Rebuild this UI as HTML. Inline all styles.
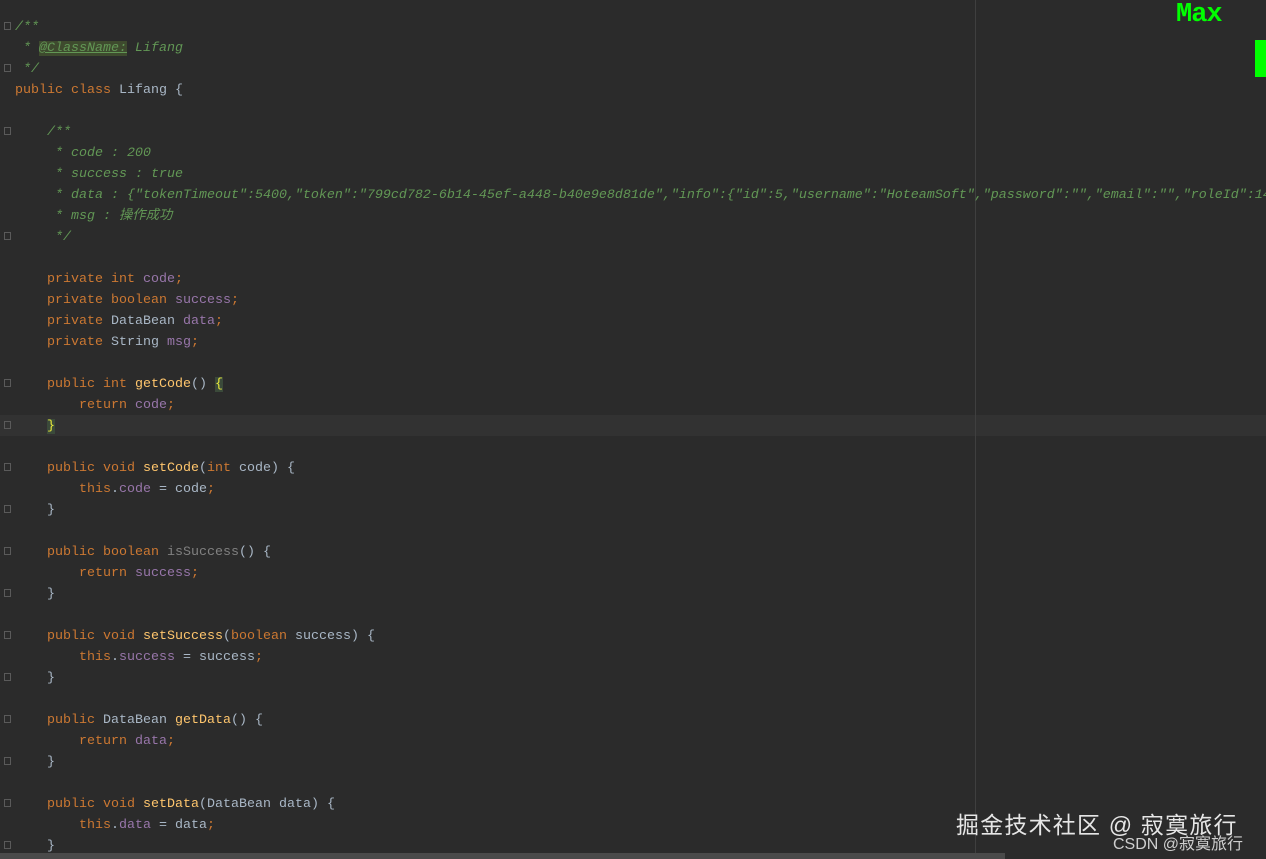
<!DOCTYPE html>
<html><head><meta charset="utf-8"><style>
html,body{margin:0;padding:0;background:#2b2b2b;width:1266px;height:859px;overflow:hidden;position:relative}
.code{position:absolute;left:15px;top:17px;font-family:"Liberation Mono","Noto Sans CJK SC",monospace;font-size:13.33px;color:#a9b7c6}
.l{height:21px;line-height:21px;white-space:pre;overflow:hidden;width:1251px}
.k{color:#cc7832}.c{color:#629755;font-style:italic}.f{color:#9876aa}.m{color:#ffc66d}.g{color:#808080}
.hl{position:absolute;left:0;top:415px;width:1266px;height:21px;background:#323232}
.vr{position:absolute;left:975px;top:0;width:1px;height:859px;background:#3f3f3f}
.sb{position:absolute;left:0;top:853px;width:1005px;height:6px;background:#4a4a4a}
.fold{position:absolute;left:4px;width:7px;height:8px;border:1px solid #5a5a5a;box-sizing:border-box}
.wm{position:absolute;font-family:"Liberation Sans","Noto Sans CJK SC",sans-serif;color:#e6e6e6;white-space:nowrap}
</style></head><body>
<div class="hl"></div>
<div class="vr"></div>
<div class="sb"></div>
<div class="code"><div class="l"><span class="c">/**</span></div><div class="l"><span class="c"> * <span style="background:#3e4a2e;text-decoration:underline">@ClassName:</span> Lifang</span></div><div class="l"><span class="c"> */</span></div><div class="l"><span class="k">public class </span>Lifang {</div><div class="l"> </div><div class="l"><span class="c">    /**</span></div><div class="l"><span class="c">     * code : 200</span></div><div class="l"><span class="c">     * success : true</span></div><div class="l"><span class="c">     * data : {"tokenTimeout":5400,"token":"799cd782-6b14-45ef-a448-b40e9e8d81de","info":{"id":5,"username":"HoteamSoft","password":"","email":"","roleId":14}}</span></div><div class="l"><span class="c">     * msg : 操作成功</span></div><div class="l"><span class="c">     */</span></div><div class="l"> </div><div class="l">    <span class="k">private int </span><span class="f">code</span><span class="k">;</span></div><div class="l">    <span class="k">private boolean </span><span class="f">success</span><span class="k">;</span></div><div class="l">    <span class="k">private </span>DataBean <span class="f">data</span><span class="k">;</span></div><div class="l">    <span class="k">private </span>String <span class="f">msg</span><span class="k">;</span></div><div class="l"> </div><div class="l">    <span class="k">public int </span><span class="m">getCode</span>() <span style="color:#e8e83a;background:#3b4a3a">{</span></div><div class="l">        <span class="k">return </span><span class="f">code</span><span class="k">;</span></div><div class="l">    <span style="color:#e8e83a;background:#3b4a3a">}</span></div><div class="l"> </div><div class="l">    <span class="k">public void </span><span class="m">setCode</span>(<span class="k">int </span>code) {</div><div class="l">        <span class="k">this</span>.<span class="f">code </span>= code<span class="k">;</span></div><div class="l">    }</div><div class="l"> </div><div class="l">    <span class="k">public boolean </span><span class="g">isSuccess</span>() {</div><div class="l">        <span class="k">return </span><span class="f">success</span><span class="k">;</span></div><div class="l">    }</div><div class="l"> </div><div class="l">    <span class="k">public void </span><span class="m">setSuccess</span>(<span class="k">boolean </span>success) {</div><div class="l">        <span class="k">this</span>.<span class="f">success </span>= success<span class="k">;</span></div><div class="l">    }</div><div class="l"> </div><div class="l">    <span class="k">public </span>DataBean <span class="m">getData</span>() {</div><div class="l">        <span class="k">return </span><span class="f">data</span><span class="k">;</span></div><div class="l">    }</div><div class="l"> </div><div class="l">    <span class="k">public void </span><span class="m">setData</span>(DataBean data) {</div><div class="l">        <span class="k">this</span>.<span class="f">data </span>= data<span class="k">;</span></div><div class="l">    }</div></div>
<div class="fold" style="top:22px"></div><div class="fold" style="top:64px"></div>
<div class="fold" style="top:127px"></div><div class="fold" style="top:232px"></div>
<div class="fold" style="top:379px"></div><div class="fold" style="top:421px"></div>
<div class="fold" style="top:463px"></div><div class="fold" style="top:505px"></div>
<div class="fold" style="top:547px"></div><div class="fold" style="top:589px"></div>
<div class="fold" style="top:631px"></div><div class="fold" style="top:673px"></div>
<div class="fold" style="top:715px"></div><div class="fold" style="top:757px"></div>
<div class="fold" style="top:799px"></div><div class="fold" style="top:841px"></div>
<div style="position:absolute;left:1176px;top:0px;font-family:'Liberation Mono',monospace;font-weight:bold;font-size:27px;color:#00ff00;letter-spacing:-1px">Max</div>
<div style="position:absolute;left:1255px;top:40px;width:11px;height:37px;background:#00ff00"></div>
<div class="wm" style="left:956px;top:806px;font-size:23px;letter-spacing:1.2px">掘金技术社区 @ 寂寞旅行</div>
<div class="wm" style="left:1113px;top:830px;font-size:16px;color:#cfcfcf">CSDN @寂寞旅行</div>
</body></html>
